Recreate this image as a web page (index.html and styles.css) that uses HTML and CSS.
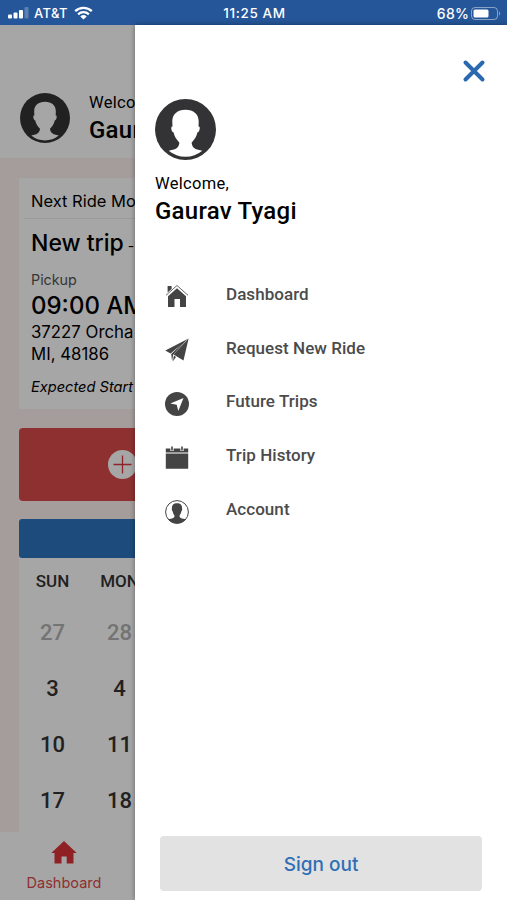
FILE: index.html
```html
<!DOCTYPE html>
<html lang="en">
<head>
    <meta charset="utf-8">
    <title>Dashboard</title>
    <link rel="stylesheet" href="styles.css">
</head>
<body>
    <!-- shared avatar shape -->
    <svg class="defs" width="0" height="0">
        <symbol id="avatar" viewBox="0 0 60 60">
            <circle cx="30" cy="30" r="30" fill="#333335"/>
            <path fill="#fff" d="M30 10.500c-8 0-13 4.500-13 11.500l.2 5c-1.400 0-1.500 1.500-.9 3.500.5 1.500 1.100 2.300 1.900 2.300.9 4.500 3 7.200 5.800 10.200-.3 3.500-2 5.300-4.500 6.500L13.500 51a26 26 0 0 0 33 0l-6-1.500c-2.500-1.200-4.200-3-4.500-6.500 2.800-3 4.900-5.700 5.800-10.200.8 0 1.400-.8 1.900-2.300.6-2 .5-3.500-.9-3.500l.2-5c0-7-5-11.500-13-11.500z"/>
        </symbol>
    </svg>

    <div class="status-bar">
        <div class="status-left">
            <svg width="21" height="12" viewBox="0 0 21 12" fill="#fff">
                <rect x="0" y="7.500" width="4" height="4" rx="1"/>
                <rect x="5.500" y="5.500" width="4" height="6" rx="1"/>
                <rect x="11" y="3" width="4" height="8.500" rx="1"/>
                <rect x="16.500" y="0" width="4" height="11.500" rx="1" opacity=".25"/>
            </svg>
            <span class="carrier">AT&amp;T</span>
            <svg width="19" height="14" viewBox="0 0 19 14" fill="none" stroke="#fff" stroke-width="2.300">
                <path d="M1.200 5.200a12 12 0 0 1 16.600 0M4.100 8.300a8 8 0 0 1 10.800 0"/>
                <path fill="#fff" stroke="none" d="M6.300 10.500a4.800 4.800 0 0 1 6.400 0L9.500 13.600z"/>
            </svg>
        </div>
        <div class="status-time">11:25 AM</div>
        <div class="status-right">
            <span>68%</span>
            <svg width="30" height="13" viewBox="0 0 30 13">
                <rect x=".5" y=".5" width="26" height="12" rx="3.500" fill="none" stroke="#fff" opacity=".45"/>
                <rect x="2.500" y="2.500" width="15" height="8" rx="1.500" fill="#fff"/>
                <path d="M28 4.500v4c1.600-.5 1.600-3.500 0-4z" fill="#fff" opacity=".45"/>
            </svg>
        </div>
    </div>

    <div class="screen">
        <div class="app">
            <div class="profile">
                <svg class="profile-avatar"><use href="#avatar"/></svg>
                <div>
                    <div class="welcome">Welcome,</div>
                    <div class="name">Gaurav Tyagi</div>
                </div>
            </div>

            <div class="content">
                <div class="ride-card">
                    <div class="ride-title">Next Ride Mo</div>
                    <div class="trip"><b>New trip</b> -</div>
                    <div class="label">Pickup</div>
                    <div class="time">09:00 AM</div>
                    <div class="address">37227 Orcha<br>MI, 48186</div>
                    <div class="expected">Expected Start</div>
                </div>

                <div class="new-ride">
                    <svg width="29" height="29" viewBox="0 0 29 29">
                        <circle cx="14.500" cy="14.500" r="14.500" fill="#fff"/>
                        <path d="M14.500 5.500v18M5.500 14.500h18" stroke="#d9383d" stroke-width="1.300"/>
                    </svg>
                </div>

                <div class="calendar">
                    <div class="month"></div>
                    <div class="week days"><span>SUN</span><span>MON</span></div>
                    <div class="week muted"><span>27</span><span>28</span></div>
                    <div class="week"><span>3</span><span>4</span></div>
                    <div class="week"><span>10</span><span>11</span></div>
                    <div class="week"><span>17</span><span>18</span></div>
                </div>
            </div>

            <div class="tabs">
                <div class="tab">
                    <svg width="26" height="23" viewBox="0 0 26 23" fill="#dc3439">
                        <path d="M13 0l12.700 12h-3.200v10.500h-6.800v-7h-5.200v7H3.500V12H.3z"/>
                    </svg>
                    <span>Dashboard</span>
                </div>
            </div>
        </div>

        <div class="shade"></div>

        <div class="drawer">
            <svg class="close" viewBox="0 0 24 24">
                <path d="M3.500 3.500l17 17M20.500 3.500l-17 17" stroke="#2a69b0" stroke-width="4" stroke-linecap="round"/>
            </svg>
            <svg class="drawer-avatar"><use href="#avatar"/></svg>
            <div class="welcome">Welcome,</div>
            <div class="name">Gaurav Tyagi</div>

            <div class="menu">
                <div class="menu-item">
                    <svg viewBox="0 0 24 24">
                        <path d="M2.600 8.500V2h4v3z"/>
                        <path d="M12 4.200l9 8V23h-6v-8H9.500v8H3V12.200z"/>
                        <path d="M1 11.300L12 1.500l11 9.800" fill="none" stroke="#666" stroke-width="1"/>
                    </svg>
                    <span>Dashboard</span>
                </div>
                <div class="menu-item">
                    <svg viewBox="0 0 24 24">
                        <path d="M23.600.5L.3 12.500l5.200 3zM23.600.5L8.600 16.500l9.900 6zM22.700.8L6.200 16l.9 7.500 1-6.800zM8.900 17.600L8 23.200l3-4.300z"/>
                    </svg>
                    <span>Request New Ride</span>
                </div>
                <div class="menu-item">
                    <svg viewBox="0 0 24 24">
                        <circle cx="12" cy="12" r="12"/>
                        <path d="M18.500 6L13.300 19l-1.600-6.300L5.300 11.500z" fill="#fff"/>
                    </svg>
                    <span>Future Trips</span>
                </div>
                <div class="menu-item">
                    <svg viewBox="0 0 24 24">
                        <path d="M.8 2.500h22.400v4H.8zM.8 7.500h22.400v15.200H.8z"/>
                        <path d="M7 1v4M17 1v4" stroke="#fff" stroke-width="3.200"/>
                        <path d="M7 .5v4M17 .5v4" stroke="#444" stroke-width="1.600"/>
                    </svg>
                    <span>Trip History</span>
                </div>
                <div class="menu-item">
                    <svg viewBox="0 0 24 24">
                        <circle cx="12" cy="12" r="11.400" fill="#fff" stroke="#444" stroke-width="1"/>
                        <path d="M12 3.200c-3.700 0-5.100 2-5 4.800-.5 1 0 3 .7 3.500.3 1.800 1 3 1.800 4 0 1.800-.8 2.300-2.400 2.900L3 19.200a11.400 11.400 0 0 0 18 0l-4.100-.8c-1.600-.6-2.400-1.100-2.400-2.900.8-1 1.500-2.200 1.800-4 .7-.5 1.200-2.500.7-3.500.1-2.800-1.300-4.800-5-4.800z"/>
                    </svg>
                    <span>Account</span>
                </div>
            </div>

            <div class="sign-out">Sign out</div>
        </div>
    </div>
</body>
</html>
```

FILE: styles.css
```css
* {
    box-sizing: border-box;
}

body {
    margin: 0;
    height: 900px;
    display: flex;
    flex-direction: column;
    overflow: hidden;
    font-family: Roboto, sans-serif;
    color: #000;
    background: #fff;
}

.defs {
    position: absolute;
}

/* status bar */
.status-bar {
    flex: none;
    height: 25px;
    padding: 1px 6px 0 8px;
    display: grid;
    grid-template-columns: 1fr auto 1fr;
    align-items: center;
    background: #255699;
    color: #fff;
    font: 500 13px Inter, sans-serif;
}

.status-left,
.status-right {
    display: flex;
    align-items: center;
}

.carrier {
    margin: 0 6px 0 5px;
    letter-spacing: 0.4px;
}

.status-time {
    font-size: 13.500px;
    letter-spacing: 0.6px;
}

.status-right {
    justify-content: flex-end;
    gap: 2px;
    font-size: 14px;
    letter-spacing: 0.2px;
}

.screen {
    flex: 1;
    min-height: 0;
    position: relative;
    display: flex;
}

/* page under the drawer */
.app {
    flex: 1;
    display: flex;
    flex-direction: column;
    background: #fff;
    white-space: nowrap;
}

.profile {
    flex: none;
    height: 133px;
    padding: 68px 20px 0;
    display: flex;
    gap: 19px;
}

.profile-avatar {
    width: 50px;
    height: 50px;
}

.welcome {
    font-size: 16.500px;
    line-height: 20px;
    letter-spacing: 0.3px;
}

.name {
    font-size: 24px;
    font-weight: 500;
    line-height: 35px;
    letter-spacing: 0.25px;
}

.content {
    flex: 1;
    min-height: 0;
    padding: 20px 19px 0;
    background: #fcf1f0;
}

.ride-card {
    height: 231px;
    padding: 0 12px;
    background: #fff;
    font-family: Inter, sans-serif;
}

.ride-title {
    height: 41px;
    margin: 0 -7px;
    padding-left: 7px;
    border-bottom: 1px solid #eee;
    font-size: 16.500px;
    line-height: 47px;
}

.trip {
    height: 49px;
    font-size: 14px;
    line-height: 49px;
}

.trip b {
    font-size: 23px;
    font-weight: 500;
}

.label {
    height: 22px;
    color: #555;
    font-size: 14.300px;
    line-height: 23px;
}

.time {
    font-size: 24px;
    font-weight: 500;
    line-height: 31px;
}

.address {
    font-size: 16.800px;
    line-height: 22px;
}

.expected {
    margin-top: 12px;
    font-size: 14.600px;
    font-style: italic;
    line-height: 20px;
}

.new-ride {
    height: 73px;
    margin-top: 18.500px;
    padding-left: 89px;
    display: flex;
    align-items: center;
    border-radius: 4px;
    background: #dc4a4b;
}

.calendar {
    height: 400px;
    margin-top: 18.500px;
    background: #fff;
}

.month {
    height: 39px;
    border-radius: 3px;
    background: #2b73bf;
}

.week {
    height: 56.200px;
    display: grid;
    grid-template-columns: repeat(7, 67px);
    align-items: center;
    text-align: center;
    color: #333;
    font-size: 22px;
    font-weight: 500;
}

.week.days {
    height: 46px;
    font-size: 17px;
}

.week.muted {
    color: #b2b2b2;
}

.tabs {
    position: relative;
    flex: none;
    height: 68px;
    background: #fff;
}

.tab {
    width: 128px;
    padding-top: 9px;
    display: flex;
    flex-direction: column;
    align-items: center;
    gap: 10px;
    color: #dc4a4b;
    font: 14.500px/18px Inter, sans-serif;
}

.shade {
    position: absolute;
    inset: 0;
    background: rgba(0, 0, 0, 0.35);
}

/* drawer */
.drawer {
    position: absolute;
    top: 0;
    right: 0;
    bottom: 0;
    left: 135px;
    padding: 34px 20px 9px;
    display: flex;
    flex-direction: column;
    background: #fff;
    box-shadow: 0 0 5px rgba(0, 0, 0, 0.4);
}

.close {
    align-self: flex-end;
    width: 26px;
    height: 24px;
}

.drawer-avatar {
    width: 61px;
    height: 61px;
    margin: 16px 0 14px;
}

.menu {
    margin-top: 38px;
    padding-left: 10px;
}

.menu-item {
    height: 53.800px;
    display: flex;
    align-items: center;
    gap: 37px;
    color: #4b4b4b;
    font-size: 17px;
    font-weight: 500;
    letter-spacing: 0.05px;
}

.menu-item svg {
    width: 24px;
    height: 24px;
    margin-top: 5px;
    fill: #444;
}

.sign-out {
    height: 55px;
    margin: auto 5px 0 5px;
    border-radius: 4px;
    background: #e2e2e2;
    color: #2f6fb5;
    font: 500 19px/57px Inter, sans-serif;
    text-align: center;
}
```
